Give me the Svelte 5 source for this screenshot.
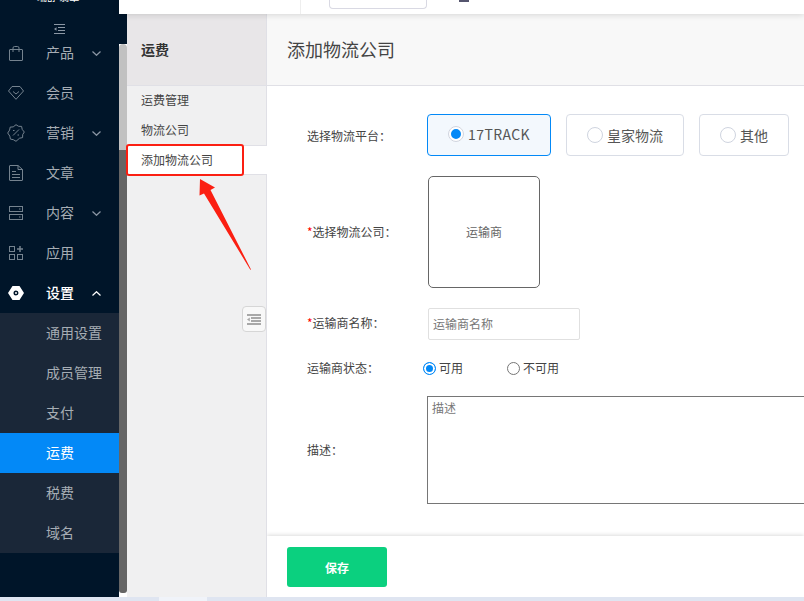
<script>
	const menu = [
		{ name: '产品', icon: 'bag', caret: 'down' },
		{ name: '会员', icon: 'gem' },
		{ name: '营销', icon: 'promo', caret: 'down' },
		{ name: '文章', icon: 'doc' },
		{ name: '内容', icon: 'server', caret: 'down' },
		{ name: '应用', icon: 'apps' },
		{ name: '设置', icon: 'gear', caret: 'up', open: true }
	];
	const subMenu = ['通用设置', '成员管理', '支付', '运费', '税费', '域名'];
	const platforms = [
		{ name: '17TRACK', width: 124, active: true },
		{ name: '皇家物流', width: 118 },
		{ name: '其他', width: 90 }
	];
</script>

<div class="page">
	<div class="body">
		<aside class="sidebar">
			<div class="logo">瑞舒 翡翠</div>
			<div class="collapse">
				<svg width="11" height="10" viewBox="0 0 11 10" fill="none" stroke="#8b97a5" stroke-width="1">
					<path d="M0 .5h11M4 3.500h7M4 6.500h7M0 9.500h11" />
					<path d="M2.500 3.200v3.600L0 5z" fill="#8b97a5" stroke="none" />
				</svg>
			</div>
			<nav>
				{#each menu as item}
					<div class="menu-item" class:open={item.open}>
						<span class="menu-icon">
							{#if item.icon === 'bag'}
								<svg width="14" height="15" viewBox="0 0 14 15" fill="none" stroke="#75838f" stroke-width="1">
									<path d="M1 3.500h12a.5.5 0 0 1 .5.500v10a.5.5 0 0 1-.5.500H1a.5.5 0 0 1-.5-.500V4a.5.5 0 0 1 .5-.500z" />
									<path d="M4 6V2a1.500 1.500 0 0 1 1.500-1.500h3A1.500 1.500 0 0 1 10 2v4" />
								</svg>
							{:else if item.icon === 'gem'}
								<svg width="16" height="14" viewBox="0 0 16 14" fill="none" stroke="#75838f" stroke-width="1">
									<path d="M4 .5h8L15.500 5 8 13.300.5 5z" />
									<path d="M5 5.500l3 2.500 3-2.500" />
								</svg>
							{:else if item.icon === 'promo'}
								<svg width="18" height="18" viewBox="0 0 18 18" fill="none" stroke="#75838f" stroke-width="1">
									<path d="M9 .7l2.600 1.600 3 .1.600 3L17.300 8l-1.600 2.600-.1 3-3 .6L9 17.300l-2.600-1.600-3-.6-.6-3L.7 9l1.900-2.900.6-3 3-.2z" />
									<path d="M6 11.500l6-6" />
									<path d="M6 6.500h1.500M10.500 11H12" />
								</svg>
							{:else if item.icon === 'doc'}
								<svg width="14" height="16" viewBox="0 0 14 16" fill="none" stroke="#75838f" stroke-width="1">
									<path d="M1 .5h8l4.500 4v10.500a.5.5 0 0 1-.5.500H1a.5.5 0 0 1-.5-.500V1A.5.5 0 0 1 1 .5z" />
									<path d="M9 .5v4h4.500M3 6.500h4M3 9.500h8M3 12.500h8" />
								</svg>
							{:else if item.icon === 'server'}
								<svg width="14" height="14" viewBox="0 0 14 14" fill="none" stroke="#75838f" stroke-width="1">
									<rect x="0.500" y="0.500" width="13" height="5" />
									<rect x="0.500" y="8.500" width="13" height="5" />
									<path d="M10 3h1.500M10 11h1.500" />
								</svg>
							{:else if item.icon === 'apps'}
								<svg width="14" height="14" viewBox="0 0 14 14" fill="none" stroke="#75838f" stroke-width="1">
									<rect x="0.500" y="0.500" width="5" height="5" />
									<rect x="0.500" y="8.500" width="5" height="5" />
									<rect x="8.500" y="8.500" width="5" height="5" />
									<path d="M11 0v6M8 3h6" stroke-width="1.500" />
								</svg>
							{:else if item.icon === 'gear'}
								<svg width="16" height="14" viewBox="0 0 16 14">
									<path fill-rule="evenodd" fill="#fff" d="M4.500 0h7L16 7l-4.500 7h-7L0 7zM8 4.500a2.500 2.500 0 1 0 0 5 2.500 2.500 0 0 0 0-5zM8 6a1 1 0 1 1 0 2 1 1 0 0 1 0-2z" />
								</svg>
							{/if}
						</span>
						<span class="menu-name">{item.name}</span>
						{#if item.caret}
							<svg class="caret" width="9" height="5" viewBox="0 0 9 5" fill="none" stroke={item.open ? '#fff' : '#8b97a5'} stroke-width="1.200">
								<path d={item.caret === 'up' ? 'M0.500 4.500L4.500 0.700l4 3.800' : 'M0.500 0.500l4 3.800 4-3.800'} />
							</svg>
						{/if}
					</div>
				{/each}
				<div class="sub-menu">
					{#each subMenu as name}
						<div class="sub-item" class:current={name === '运费'}>{name}</div>
					{/each}
				</div>
			</nav>
		</aside>

		<div class="right">
			<header class="topbar">
				<div class="search"></div>
				<div class="top-icon"></div>
			</header>
			<div class="workspace">
				<div class="scrollbar">
					<div class="thumb-light"></div>
					<div class="thumb-dark"></div>
				</div>
				<section class="subnav">
					<h2>运费</h2>
					<div class="subnav-item">运费管理</div>
					<div class="subnav-item">物流公司</div>
					<div class="subnav-item selected">
						添加物流公司
						<span class="red-box"></span>
					</div>
					<svg class="arrow" width="61" height="100" viewBox="0 0 61 100">
						<path fill="#fb1f12" d="M9 1L24 9.500l-4.500 2.500L60 91.500l-.7.200L13 15.500 8.500 17.500z" />
					</svg>
					<button class="fold" aria-label="fold">
						<svg width="14" height="11" viewBox="0 0 14 11" fill="none" stroke="#a8a8a8" stroke-width="2">
							<path d="M0 1h14M4 4h10M4 7h10M0 10h14" />
							<path d="M2.800 3.600v3.800L0 5.500z" fill="#a8a8a8" stroke="none" />
						</svg>
					</button>
				</section>
				<main class="main">
					<div class="title">添加物流公司</div>
					<form class="form">
						<div class="row platform-row">
							<span class="label">选择物流平台：</span>
							<div class="platforms">
								{#each platforms as p}
									<div class="platform" class:active={p.active} style="width: {p.width}px">
										<span class="dot"></span>{p.name}
									</div>
								{/each}
							</div>
						</div>
						<div class="row company-row">
							<span class="label"><i>*</i>选择物流公司：</span>
							<div class="company">运输商</div>
						</div>
						<div class="row name-row">
							<span class="label"><i>*</i>运输商名称：</span>
							<div class="input">运输商名称</div>
						</div>
						<div class="row status-row">
							<span class="label">运输商状态：</span>
							<div class="radios">
								<span class="radio on"></span><span class="radio-text first">可用</span>
								<span class="radio"></span><span class="radio-text">不可用</span>
							</div>
						</div>
						<div class="row desc-row">
							<span class="label">描述：</span>
							<div class="textarea">描述</div>
						</div>
					</form>
					<footer class="footer">
						<button class="save" type="button">保存</button>
					</footer>
				</main>
			</div>
		</div>
	</div>
	<div class="strip"><span></span></div>
</div>

<style>
	:global(body) {
		margin: 0;
		font-family: 'Noto Sans CJK SC', 'Liberation Sans', sans-serif;
	}

	.page {
		width: 804px;
		height: 601px;
		overflow: hidden;
		display: flex;
		flex-direction: column;
	}

	.body {
		height: 597px;
		display: flex;
	}

	.strip {
		height: 4px;
		padding-left: 159px;
		background: #dfe5f1;
	}

	.strip span {
		display: block;
		width: 48px;
		height: 4px;
		background: #f0f3f9;
	}

	/* sidebar */
	.sidebar {
		width: 119px;
		flex-shrink: 0;
		background: #001529;
		overflow: hidden;
	}

	.logo {
		height: 34px;
		margin-top: -10px;
		padding-left: 37px;
		color: #fff;
		font-size: 10px;
		line-height: 14px;
	}

	.collapse {
		height: 9px;
		padding-left: 54px;
	}

	.collapse svg {
		display: block;
	}

	.menu-item {
		height: 40px;
		display: flex;
		align-items: center;
		color: #a6adb4;
		font-size: 14px;
	}

	.menu-item.open {
		color: #fff;
		font-weight: 500;
	}

	.menu-icon {
		width: 46px;
		flex-shrink: 0;
		display: flex;
		justify-content: center;
		padding-right: 14px;
		box-sizing: border-box;
	}

	.menu-name {
		width: 46px;
		flex-shrink: 0;
		padding-bottom: 2px;
	}

	.caret {
		flex-shrink: 0;
	}

	.sub-menu {
		background: #1a2738;
	}

	.sub-item {
		height: 40px;
		line-height: 38px;
		padding-left: 46px;
		color: #a6adb4;
		font-size: 14px;
	}

	.sub-item.current {
		background: #0389f7;
		color: #fff;
	}

	/* right side */
	.right {
		flex: 1;
		min-width: 0;
		display: flex;
		flex-direction: column;
	}

	.topbar {
		height: 14px;
		flex-shrink: 0;
		position: relative;
		z-index: 2;
		background: #fff;
		box-shadow: 0 1px 6px rgba(0, 0, 0, 0.14);
		display: flex;
		padding-left: 181px;
		box-sizing: border-box;
	}

	.topbar::before {
		content: '';
		width: 1px;
		height: 14px;
		background: #eeeeee;
	}

	.search {
		width: 98px;
		height: 10px;
		margin-top: -1px;
		margin-left: 28px;
		box-sizing: border-box;
		border: 1px solid #d9d9e3;
		border-top: 0;
		border-radius: 0 0 4px 4px;
	}

	.top-icon {
		width: 10px;
		height: 2px;
		margin-left: 32px;
		background: #55556e;
	}

	.workspace {
		flex: 1;
		min-height: 0;
		display: flex;
	}

	.scrollbar {
		width: 8px;
		flex-shrink: 0;
		padding-top: 30px;
		background: linear-gradient(#001529 0 100%) no-repeat;
		background-size: 100% 30px;
		display: flex;
		flex-direction: column;
	}

	.thumb-light {
		height: 106px;
		background: #c1c1c1;
		border-radius: 4px 4px 0 0;
	}

	.thumb-dark {
		height: 443px;
		background: #656565;
		border-radius: 0 0 3px 3px;
	}

	.subnav {
		width: 140px;
		flex-shrink: 0;
		position: relative;
		box-sizing: border-box;
		background: #f0f0f1;
		border-right: 1px solid #e0e0e6;
	}

	.subnav h2 {
		margin: 0;
		height: 72px;
		box-sizing: border-box;
		padding-left: 14px;
		line-height: 71px;
		font-size: 14px;
		font-weight: 700;
		color: #333;
		background: #e8e6e8;
		border-bottom: 1px solid #e0e0e6;
	}

	.subnav-item {
		height: 30px;
		line-height: 29px;
		padding-left: 14px;
		font-size: 12px;
		color: #444;
		position: relative;
	}

	.subnav-item:nth-child(2) {
		margin-top: -1px;
	}

	.subnav-item.selected {
		width: 140px;
		box-sizing: border-box;
		background: #fff;
		border-top: 1px solid #e0e0e6;
		border-bottom: 1px solid #e0e0e6;
		line-height: 28px;
	}

	.red-box {
		position: absolute;
		left: -1px;
		top: -2px;
		width: 118px;
		height: 32px;
		box-sizing: border-box;
		border: 2.500px solid #fb1f12;
		border-radius: 3px;
	}

	.arrow {
		position: absolute;
		left: 64px;
		top: 164px;
	}

	.fold {
		position: absolute;
		left: 115px;
		top: 292px;
		width: 24px;
		height: 26px;
		padding: 0 0 0 4px;
		display: flex;
		align-items: center;
		background: #f8f8f8;
		border: 1px solid #d6d6d6;
		border-radius: 4px;
	}

	.main {
		flex: 1;
		min-width: 0;
		display: flex;
		flex-direction: column;
		background: #fff;
	}

	.title {
		height: 72px;
		flex-shrink: 0;
		box-sizing: border-box;
		padding-left: 20px;
		line-height: 71px;
		font-size: 18px;
		color: #444;
		background: #f8f8f8;
		border-bottom: 1px solid #e0e0e6;
	}

	.form {
		flex: 1;
		min-height: 0;
		padding: 28px 0 0 40px;
		font-size: 12px;
		color: #444;
	}

	.row {
		display: flex;
		align-items: center;
	}

	.label {
		width: 120px;
		flex-shrink: 0;
		padding-bottom: 2px;
	}

	.platform-row .label {
		padding-bottom: 0;
	}

	.name-row .label {
		padding-bottom: 4px;
	}

	.label i {
		font-style: normal;
		color: #f00;
	}

	.platforms {
		display: flex;
		gap: 15px;
	}

	.platform {
		height: 42px;
		box-sizing: border-box;
		padding-bottom: 1px;
		display: flex;
		align-items: center;
		justify-content: center;
		border: 1px solid #d9dde6;
		border-radius: 4px;
		font-size: 14px;
		color: #555;
	}

	.platform.active {
		background: #f3f8fd;
		border-color: #0389f7;
		letter-spacing: 0.4px;
		padding-bottom: 2px;
	}

	.dot {
		width: 16px;
		height: 16px;
		box-sizing: border-box;
		margin-right: 4px;
		border: 1px solid #cfd4df;
		border-radius: 50%;
		background: #fff;
	}

	.active .dot {
		border: 3px solid #fff;
		outline: 1px solid #cfd4df;
		outline-offset: -1px;
		background: #0389f7;
	}

	.company-row {
		margin-top: 20px;
	}

	.company {
		width: 112px;
		height: 112px;
		margin-left: 1px;
		padding-bottom: 2px;
		box-sizing: border-box;
		border: 1px solid #666;
		border-radius: 5px;
		display: flex;
		align-items: center;
		justify-content: center;
		color: #666;
	}

	.name-row {
		margin-top: 20px;
	}

	.input {
		width: 152px;
		height: 32px;
		margin-left: 1px;
		box-sizing: border-box;
		padding-left: 4px;
		line-height: 30px;
		border: 1px solid #e0e0e0;
		border-radius: 2px;
		color: #777;
	}

	.status-row {
		margin-top: 17px;
		height: 23px;
	}

	.radios {
		display: flex;
		align-items: center;
		margin-left: -4px;
	}

	.radio {
		width: 13px;
		height: 13px;
		box-sizing: border-box;
		border: 1px solid #767676;
		border-radius: 50%;
		margin-right: 3px;
	}

	.radio.on {
		border: 1px solid #0389f7;
		background: #0389f7;
		box-shadow: inset 0 0 0 2px #fff;
	}

	.radio-text {
		padding-bottom: 2px;
	}

	.radio-text.first {
		width: 68px;
	}

	.desc-row {
		margin-top: 16px;
	}

	.textarea {
		width: 500px;
		height: 108px;
		flex-shrink: 0;
		box-sizing: border-box;
		padding: 3px 4px;
		border: 1px solid #767676;
		color: #777;
		line-height: 16px;
	}

	.footer {
		height: 61px;
		flex-shrink: 0;
		box-sizing: border-box;
		padding: 11px 0 0 20px;
		background: #fff;
		box-shadow: 0 -1px 4px rgba(0, 0, 0, 0.14);
	}

	.save {
		display: block;
		width: 100px;
		height: 40px;
		border: 0;
		border-radius: 3px;
		background: #0bd07f;
		color: #fff;
		font-family: inherit;
		font-size: 12px;
		font-weight: 700;
		padding: 0;
	}
</style>
